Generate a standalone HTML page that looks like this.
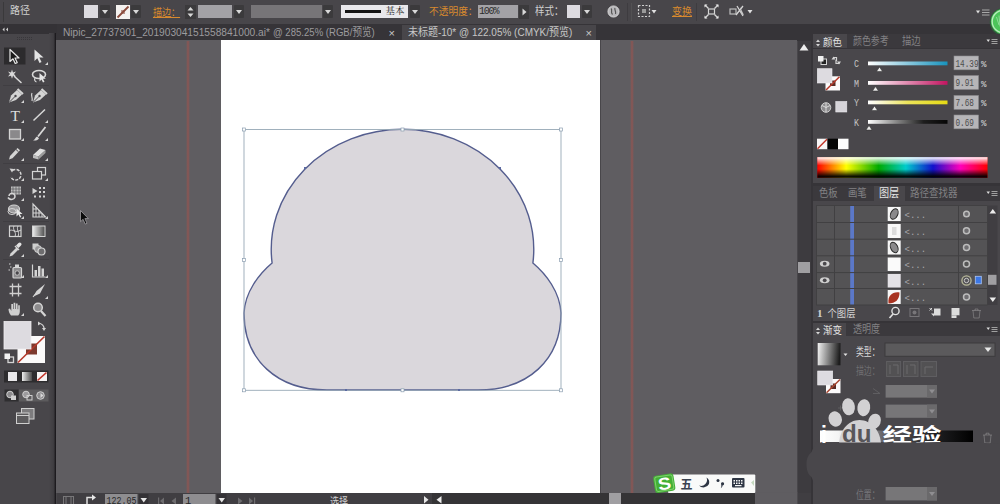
<!DOCTYPE html>
<html lang="zh">
<head>
<meta charset="utf-8">
<title>Illustrator</title>
<style>
*{box-sizing:border-box;margin:0;padding:0}
html,body{width:1000px;height:504px;overflow:hidden;background:#48464a}
body{position:relative;font-family:"Liberation Sans","Noto Sans CJK SC",sans-serif;font-size:11px;color:#d6d6d6}
.a{position:absolute}
.t{position:absolute;white-space:nowrap;line-height:1}
#topbar{left:0;top:0;width:1000px;height:24px;background:#48464a}
#tabbar{left:56px;top:24px;width:756px;height:16.5px;background:#363438}
#tab2{left:402px;top:24.5px;width:194px;height:16px;background:#48464a}
#toolbox{left:0;top:24px;width:54.600px;height:480px;background:#48464a}
#toolhead{left:0;top:24px;width:56.500px;height:9.5px;background:#343236}
#toolsep{left:48.600px;top:33px;width:7.500px;height:471px;background:linear-gradient(to right,#48464a 0,#413f43 50%,#3b393d 76%,#201e22 82%,#1c1a1e 94%,#3a383c 100%)}
#canvas{left:56.100px;top:40px;width:741.400px;height:453px;background:#5f5d61}
#artboard{left:220.8px;top:40px;width:380.4px;height:453.5px;background:#fff;border-right:1px solid #48464a}
.guide{top:40.5px;width:4px;height:453px;background:linear-gradient(to right,rgba(140,88,86,0),rgba(136,86,84,.9) 40%,rgba(136,86,84,.9) 60%,rgba(140,88,86,0))}
#vscroll{left:797.5px;top:40.5px;width:13px;height:463.5px;background:#3d3b3f}
#vthumb{left:798.4px;top:261.5px;width:11.6px;height:11.2px;background:#a09fa2}
#status{left:56.5px;top:493px;width:754px;height:11px;background:#403e42}
#hthumb{left:609px;top:493px;width:12px;height:11px;background:#a09fa2}
#dock{left:810.5px;top:24px;width:190px;height:480px;background:#363438}
.panel{background:#49474b}
.phead{background:#3b393d}
.or{color:#d88a2e}
.dd{background:#3b3a3c;border-radius:1px}
.dd:after{content:"";position:absolute;left:50%;top:50%;margin:-1.5px 0 0 -3px;border:3px solid transparent;border-top:4px solid #d8d8d8;border-bottom:none}
.sw{background:#dddbe0}
.ci{font-family:"Noto Serif CJK SC","Noto Sans CJK SC",serif}
</style>
</head>
<body>
<div class="a" id="topbar"></div>
<div class="a" id="tabbar"></div>
<div class="a" id="tab2"></div>
<div class="a" id="toolbox"></div>
<div class="a" id="toolhead"></div>
<div class="a" id="toolsep"></div>
<div class="a" id="canvas"></div>
<div class="a" id="artboard"></div>
<div class="a guide" style="left:186.4px"></div>
<div class="a guide" style="left:629.8px"></div>
<div class="a" id="vscroll"></div>
<div class="a" id="vthumb"></div>
<div class="a" id="status"></div>
<div class="a" id="hthumb"></div>
<div class="a" id="dock"></div>

<!-- ARTWORK -->
<svg class="a" style="left:0;top:0" width="1000" height="504" viewBox="0 0 1000 504">
  <path d="M272.1,263 A131.3,120 0 0 1 402.5,129.300 A131.3,120 0 0 1 532.9,263 C546,274 560,292 561,313 C561,360 528,390 478,390 L327,390 C277,390 244,360 244,313 C245,292 259,274 272.1,263 Z" fill="#dad7dc" stroke="#545d8e" stroke-width="1.400"/>
  <rect x="244" y="129.500" width="317" height="260.800" fill="none" stroke="#97a8b6" stroke-width="0.900"/>
  <g fill="#fff" stroke="#8a9db0" stroke-width="0.7">
    <rect x="242.5" y="128" width="3" height="3"/><rect x="401" y="128" width="3" height="3"/><rect x="559.5" y="128" width="3" height="3"/>
    <rect x="242.5" y="258.500" width="3" height="3"/><rect x="559.5" y="258.500" width="3" height="3"/>
    <rect x="242.5" y="388.800" width="3" height="3"/><rect x="401" y="388.800" width="3" height="3"/><rect x="559.5" y="388.800" width="3" height="3"/>
  </g>
  <g fill="#5b6aa2">
    <rect x="304" y="167" width="2" height="2"/><rect x="499" y="167" width="2" height="2"/>
    <rect x="345" y="389" width="2" height="2"/><rect x="458" y="389" width="2" height="2"/>
  </g>
</svg>

<!-- TOPBAR -->
<div id="tb">
<div class="a" style="left:3px;top:2px;width:1px;height:20px;background:#3a393b"></div>
<div class="t" style="left:10px;top:5.500px;font-size:10px;color:#d0d0d0">路径</div>
<div class="a sw" style="left:84px;top:4.5px;width:14px;height:13.5px"></div>
<div class="a dd" style="left:99.5px;top:5px;width:10px;height:13px"></div>
<svg class="a" style="left:116px;top:4.5px" width="14" height="14" viewBox="0 0 14 14"><rect width="14" height="14" fill="#f4f2f0"/><path d="M1.500,12.500L12.500,1.500" stroke="#8a4a3c" stroke-width="1.800"/><rect x="5" y="5" width="4" height="4" fill="#8a4a3c" opacity=".55"/></svg>
<div class="a dd" style="left:131px;top:5px;width:10px;height:13px"></div>
<div class="t or" style="left:152.500px;top:6.500px;font-size:10.500px;text-decoration:underline;transform-origin:0 0;transform:scaleX(.86)">描边：</div>
<svg class="a" style="left:184.500px;top:4.500px" width="11" height="14" viewBox="0 0 11 14"><rect width="11" height="14" fill="#3b3a3c"/><path d="M2.500,5.500L5.500,2L8.500,5.500Z M2.500,8.500L5.500,12L8.500,8.500Z" fill="#d8d8d8"/></svg>
<div class="a" style="left:197.5px;top:4.5px;width:34.5px;height:13.5px;background:#a3a2a6"></div>
<div class="a dd" style="left:234px;top:5px;width:10px;height:13px"></div>
<div class="a" style="left:251px;top:5px;width:70.500px;height:13px;background:#777578"></div>
<div class="a dd" style="left:323px;top:5px;width:10px;height:13px"></div>
<div class="a" style="left:340.500px;top:5px;width:67px;height:13px;background:#e9e8eb"></div>
<div class="a" style="left:345px;top:10.300px;width:36px;height:2.400px;background:#141414"></div>
<div class="t ci" style="left:385.500px;top:6px;font-size:9.500px;color:#2a2a2a">基本</div>
<div class="a dd" style="left:410px;top:5px;width:10px;height:13px"></div>
<div class="t or" style="left:429px;top:6px;font-size:10.500px;transform-origin:0 0;transform:scaleX(.925)">不透明度：</div>
<div class="a" style="left:477.500px;top:4.500px;width:40px;height:13.500px;background:#a3a2a6"></div>
<div class="t" style="left:479px;top:6.500px;font-size:10px;color:#2c2c2c;font-family:'Liberation Mono',monospace;letter-spacing:-1.200px">100%</div>
<svg class="a" style="left:519px;top:4.500px" width="10" height="14" viewBox="0 0 10 14"><rect width="10" height="14" fill="#3b3a3c"/><path d="M3.500,3.500L7.500,7L3.500,10.500Z" fill="#d8d8d8"/></svg>
<div class="t" style="left:535px;top:6px;font-size:11px;color:#d0d0d0;transform-origin:0 0;transform:scaleX(.86)">样式：</div>
<div class="a sw" style="left:567px;top:4.500px;width:13px;height:13.500px"></div>
<div class="a dd" style="left:581.500px;top:5px;width:10px;height:13px"></div>
<svg class="a" style="left:607px;top:4.500px" width="13" height="13" viewBox="0 0 13 13"><circle cx="6.500" cy="6.500" r="5.600" fill="#b9b8bb"/><circle cx="6.500" cy="6.500" r="5.600" fill="none" stroke="#e2e2e2" stroke-width=".8"/><path d="M4,3.500C6,5 3,7 5.500,9.500 M8,3C7,5 9.500,6 8.500,9" stroke="#555" stroke-width="1.200" fill="none"/></svg>
<div class="a" style="left:627px;top:3px;width:1px;height:18px;background:#3e3c40"></div>
<div class="a" style="left:631px;top:3px;width:1px;height:18px;background:#525153"></div>
<svg class="a" style="left:637px;top:4px" width="22" height="15" viewBox="0 0 22 15"><rect x="1.500" y="1.500" width="11" height="11" fill="none" stroke="#cfcfcf" stroke-width="1.200" stroke-dasharray="2 1.500"/><rect x="5" y="5" width="4" height="4" fill="#9a9a9a"/><path d="M14.500,6L19.500,6L17,9.500Z" fill="#e0e0e0"/></svg>
<div class="t or" style="left:672px;top:6.500px;font-size:10px;text-decoration:underline">变换</div>
<div class="a" style="left:695.500px;top:3px;width:1px;height:18px;background:#3e3c40"></div>
<svg class="a" style="left:704px;top:4px" width="15" height="15" viewBox="0 0 15 15"><rect x="4.500" y="5" width="6" height="5" fill="none" stroke="#d5d5d5" stroke-width="1.200"/><path d="M1,1L4.500,4.500M14,1L10.500,4.500M1,14L4.500,10.500M14,14L10.500,10.500" stroke="#d5d5d5" stroke-width="1.400"/><path d="M0.500,0.500h3l-3,3zM14.500,0.500h-3l3,3zM0.500,14.500h3l-3,-3zM14.500,14.500h-3l3,-3z" fill="#e5e5e5"/></svg>
<svg class="a" style="left:729px;top:4px" width="26" height="15" viewBox="0 0 26 15"><rect x="1" y="5" width="6" height="5" fill="none" stroke="#bdbdbd" stroke-width="1.200"/><path d="M8,2L14,12M14,2L7,11" stroke="#d5d5d5" stroke-width="1.300"/><path d="M11,3l4,8l-3,-1z" fill="#c8c8c8"/><path d="M18.500,6L23.500,6L21,9.500Z" fill="#e0e0e0"/></svg>
<svg class="a" style="left:975px;top:8px" width="16" height="10" viewBox="0 0 16 10"><path d="M1,2.500h4L3,5.500Z" fill="#e0e0e0"/><path d="M7,2h7.500M7,4.500h7.500M7,7h7.500" stroke="#a8a8a8" stroke-width="1.100"/></svg>
<svg class="a" style="left:984px;top:7px" width="16" height="30" viewBox="0 0 16 30"><circle cx="19.500" cy="15" r="13.800" fill="#2f5b3a"/><circle cx="19.500" cy="14.500" r="12.600" fill="#4cc45a"/><circle cx="19.500" cy="14.500" r="11.300" fill="none" stroke="#b9ecbd" stroke-width="1.300"/><path d="M12.500,10l2.500,8M15,8.500l1,11" stroke="#8fdc97" stroke-width="1"/></svg>
</div>

<!-- TABS -->
<div class="t" style="left:62.800px;top:26.500px;font-size:11.500px;color:#9c9b9e;transform-origin:0 0;transform:scaleX(.884)">Nipic_27737901_20190304151558841000.ai*</div>
<div class="t" style="left:273px;top:26.500px;font-size:11.500px;color:#9c9b9e;transform-origin:0 0;transform:scaleX(.832)">@ 285.25% (RGB/预览)</div>
<div class="t" style="left:388.500px;top:27.500px;font-size:11px;color:#c8c8c8">×</div>
<div class="t" style="left:408px;top:26.500px;font-size:11.500px;color:#c6c6c6;transform-origin:0 0;transform:scaleX(.868)">未标题-10* @ 122.05% (CMYK/预览)</div>
<div class="t" style="left:585.500px;top:27.500px;font-size:11px;color:#c8c8c8">×</div>
<!--TOOLS-->
<div id="tools">
<svg class="a" style="left:0;top:24px" width="56" height="420" viewBox="0 24 56 420">
  <!-- header collapse arrows + grip -->
  <path d="M4.500,27.500L2.500,29.500L4.500,31.500Z M8,27.500L6,29.500L8,31.500Z" fill="#cfcfcf"/>
  <path d="M17,37.500h16M17,39.500h16" stroke="#39373b" stroke-width="1" stroke-dasharray="1 1"/>
  <!-- selected tool bg -->
  <rect x="4" y="47.500" width="21.500" height="17" fill="#2c2b2d"/>
  <!-- separators -->
  <g stroke="#403e42" stroke-width="1"><path d="M3,85.500h46M3,163.500h46M3,221.500h46M3,259.500h46"/></g>
  <!-- sub-tool triangles -->
  <g fill="#d5d5d5">
    <path d="M48,62v3h-3z"/><path d="M24,100v3h-3z"/><path d="M24,120v3h-3z"/><path d="M48,120v3h-3z"/>
    <path d="M24,138v3h-3z"/><path d="M48,138v3h-3z"/><path d="M24,158v3h-3z"/><path d="M48,158v3h-3z"/>
    <path d="M24,178v3h-3z"/><path d="M48,178v3h-3z"/><path d="M24,198v3h-3z"/><path d="M24,216v3h-3z"/><path d="M48,216v3h-3z"/>
    <path d="M24,254v3h-3z"/><path d="M24,275v3h-3z"/><path d="M48,275v3h-3z"/><path d="M48,296v3h-3z"/><path d="M24,313v3h-3z"/>
  </g>
  <!-- row1: selection (outlined), direct selection (filled) -->
  <path d="M10,49.500L10,61.500L13,58.800L15.200,63.500L17.200,62.600L15,58L19,58Z" fill="#1a1a1a" stroke="#e8e8e8" stroke-width="1.200" stroke-linejoin="round"/>
  <path d="M34.500,49.500L34.500,61L37.300,58.300L39.500,63L41.500,62L39.300,57.500L43.500,57.500Z" fill="#e4e4e4"/>
  <!-- row2: magic wand, lasso -->
  <g stroke="#d8d8d8" stroke-width="1.600" stroke-linecap="round"><path d="M14.500,76.500L21,82.500"/></g>
  <path d="M12,69.500l1,3l3,-1l-2,2.500l2,2.500l-3,-.8l-1,3l-1,-3l-3,.8l2,-2.500l-2,-2.500l3,1z" fill="#d8d8d8"/>
  <ellipse cx="39" cy="74.500" rx="6.500" ry="4" fill="none" stroke="#d8d8d8" stroke-width="1.600"/>
  <path d="M39.500,73l0,8.500l2,-2l1.500,3l1.500,-.7l-1.500,-3l2.800,0z" fill="#e4e4e4"/>
  <path d="M35,78c-1,2 0,3.500 1.500,4" stroke="#d8d8d8" stroke-width="1.200" fill="none"/>
  <!-- row3: pen, curvature pen -->
  <path d="M9,102.500l2,-7l6,-5.500l5,4.500l-6,5.500z" fill="#d4d4d4"/><path d="M9.500,102l5.500,-5.500" stroke="#48464a" stroke-width="1"/><circle cx="15.500" cy="96" r="1.200" fill="#48464a"/><path d="M17.500,89l5.500,5" stroke="#d4d4d4" stroke-width="2"/>
  <path d="M33,102.500l2,-7l6,-5.500l5,4.500l-6,5.500z" fill="#d4d4d4"/><path d="M33.500,102l5.500,-5.500" stroke="#48464a" stroke-width="1"/><circle cx="39.500" cy="96" r="1.200" fill="#48464a"/><path d="M41.500,89l5.500,5" stroke="#d4d4d4" stroke-width="2"/><path d="M32,93c-1.500,3 1,4 0,8" stroke="#d4d4d4" stroke-width="1.200" fill="none"/>
  <!-- row4: T, line -->
  <text x="10.500" y="120.500" font-family="Liberation Serif, serif" font-size="15.500" fill="#dcdcdc">T</text>
  <path d="M33.500,120.500L45,109.500" stroke="#d8d8d8" stroke-width="1.500"/>
  <!-- row5: rectangle, brush -->
  <rect x="9.500" y="129.500" width="11" height="9.500" fill="#8a898b" stroke="#d4d4d4" stroke-width="1.300"/>
  <path d="M45.500,127L38,136.500" stroke="#d8d8d8" stroke-width="1.800"/><path d="M33,140.500c2,-.5 2,-3 4,-4l2,1.800c-1,2 -3,2.500 -6,2.200z" fill="#d8d8d8"/>
  <!-- row6: pencil, eraser -->
  <path d="M9,159.500l1,-3.500l7.500,-8l2.500,2.300l-7.500,8z" fill="#d4d4d4"/><path d="M16,149.500l2.500,2.300" stroke="#48464a" stroke-width="1"/>
  <path d="M33,155l7,-6.500l5.500,1.500l-7,6.500z" fill="#e0e0e0"/><path d="M33,155l5.500,1.500v3l-5.500,-1.500z" fill="#bdbdbd"/><path d="M38.500,156.500l7,-6.500v3l-7,6.500z" fill="#9d9d9d"/>
  <!-- row7: rotate, scale -->
  <path d="M12.500,170.500A5.300,5.300 0 1 1 10.800,177" fill="none" stroke="#d4d4d4" stroke-width="1.500" stroke-dasharray="3 1.200"/><path d="M9.500,168.500l4.500,.5l-2,3.500z" fill="#d4d4d4"/>
  <rect x="37.500" y="167.500" width="8" height="7.500" fill="none" stroke="#d4d4d4" stroke-width="1.200"/><rect x="32.500" y="171.500" width="9" height="7.500" fill="#48464a" stroke="#d4d4d4" stroke-width="1.200"/>
  <!-- row8: warp/width, free transform -->
  <rect x="11" y="186.500" width="10" height="8" fill="#bcbcbc"/><path d="M13,186.500v8M16,186.500v8M19,186.500v8M11,189h10M11,192h10" stroke="#48464a" stroke-width=".6"/><path d="M9,196a3,3 0 1 1 5,2.500a4,4 0 0 1 -6,-1" fill="none" stroke="#d4d4d4" stroke-width="1.600"/>
  <path d="M32.500,188l5,3l-5,3z" fill="#d4d4d4"/><g fill="#d4d4d4"><rect x="39" y="187" width="2" height="2"/><rect x="43" y="187" width="2" height="2"/><rect x="39" y="191" width="2" height="2"/><rect x="43" y="191" width="2" height="2"/><rect x="39" y="195.500" width="2" height="2"/><rect x="43" y="195.500" width="2" height="2"/><rect x="34" y="195.500" width="2" height="2"/></g>
  <!-- row9: shape builder, perspective grid -->
  <ellipse cx="14" cy="209" rx="5.500" ry="4" fill="#9b9a9c" stroke="#d4d4d4" stroke-width="1.200"/><ellipse cx="12" cy="211.500" rx="4" ry="3" fill="none" stroke="#d4d4d4" stroke-width="1"/><path d="M16.500,208.500v8l2,-2l1.500,3l1.300,-.6l-1.500,-3h2.700z" fill="#e8e8e8"/>
  <path d="M33,204v13h12.500z" fill="none" stroke="#d4d4d4" stroke-width="1.200"/><path d="M36,207v10M39,210v7M42,213v4M33,209h4M33,213h8" stroke="#d4d4d4" stroke-width="1"/>
  <!-- row10: mesh, gradient -->
  <rect x="9.500" y="226" width="11.500" height="10.500" fill="none" stroke="#d4d4d4" stroke-width="1.200"/><path d="M9.500,231c3,-3 5,3 11.500,-1M14,226c-2,4 3,6 1,10.500M18,226c-2,4 2,6 0,10.500" stroke="#d4d4d4" stroke-width="1" fill="none"/>
  <defs><linearGradient id="gt" x1="0" x2="1"><stop offset="0" stop-color="#efefef"/><stop offset="1" stop-color="#4a4a4a"/></linearGradient></defs>
  <rect x="32.500" y="226" width="12.500" height="10.500" fill="url(#gt)" stroke="#d4d4d4" stroke-width="1"/>
  <!-- row11: eyedropper, blend -->
  <path d="M9.500,256.500l1,-3l6,-6l2,2l-6,6z" fill="#d4d4d4"/><path d="M16,245.500l2.500,-2.500a1.600,1.600 0 0 1 2.500,2.500l-2.500,2.500z" fill="#e2e2e2"/><path d="M15,246l4,4" stroke="#d4d4d4" stroke-width="1.500"/>
  <rect x="32.500" y="243.500" width="6" height="6" fill="#cfcfcf"/><circle cx="38" cy="249" r="3.500" fill="#9a999b" stroke="#d4d4d4" stroke-width="1"/><circle cx="41.500" cy="251.500" r="3.500" fill="#6d6c6e" stroke="#d4d4d4" stroke-width="1.200"/>
  <!-- row12: symbol sprayer, graph -->
  <rect x="13" y="267.500" width="8.500" height="10.500" rx="1" fill="#8c8b8d" stroke="#d4d4d4" stroke-width="1.200"/><rect x="15" y="264.500" width="4" height="3" fill="#d4d4d4"/><circle cx="17.200" cy="273" r="2.200" fill="#48464a" stroke="#d4d4d4" stroke-width=".8"/><path d="M9,264h1.500M10,267h1.500M8.500,270h1.500" stroke="#d4d4d4" stroke-width="1.200"/>
  <path d="M32.500,264.500v12.500h13" stroke="#d4d4d4" stroke-width="1.200" fill="none"/><rect x="34.500" y="270" width="2.500" height="6.500" fill="#d4d4d4"/><rect x="38" y="266" width="2.500" height="10.500" fill="#d4d4d4"/><rect x="41.500" y="268.500" width="2.500" height="8" fill="#d4d4d4"/>
  <!-- row13: artboard, slice -->
  <path d="M12.500,283.500v13M18.500,283.500v13M9.500,286.500h12M9.500,293.500h12" stroke="#cfcfcf" stroke-width="1.300" fill="none"/>
  <path d="M33.500,296.500l3,-5.500l8.500,-7l-5,9.500z" fill="#d4d4d4"/><path d="M33,297l4,-5" stroke="#d4d4d4" stroke-width="1.200"/>
  <!-- row14: hand, zoom -->
  <path d="M11,315.500c-1.500,-2 -2.500,-4 -2.500,-6.500l1.500,-.5l1.300,2.500v-7h1.700v5h.6v-6.200h1.700v6.200h.6v-5.400h1.700v5.600h.6v-4h1.600v6.300c0,2 -.8,3 -1.600,4z" fill="#d0d0d0"/>
  <circle cx="38" cy="307.500" r="4.300" fill="#8c8b8d" stroke="#d4d4d4" stroke-width="1.500"/><path d="M41,311l4.500,5" stroke="#d4d4d4" stroke-width="2.200"/>
  <!-- fill / stroke -->
  <path d="M39,323.500a5,5 0 0 1 5,5.500" fill="none" stroke="#d4d4d4" stroke-width="1.200"/><path d="M38,321.500l3,2l-3,2z M42,328l2,3l2,-3z" fill="#d4d4d4"/>
  <rect x="17.500" y="336" width="27.500" height="27" fill="#fbfafa"/>
  <rect x="26" y="343.500" width="11" height="11" fill="#7c392e"/>
  <path d="M18,362.500L44.500,336.500" stroke="#b5382a" stroke-width="1.600"/>
  <rect x="4" y="321.500" width="27" height="27.500" fill="#dddbe0" stroke="#efeef0" stroke-width=".8"/>
  <rect x="8" y="357" width="5.500" height="5.500" fill="none" stroke="#d4d4d4" stroke-width="1.300"/><rect x="4.500" y="353.500" width="5.500" height="5.500" fill="#f2f2f2"/>
  <!-- colour/gradient/none buttons -->
  <rect x="4" y="370.500" width="44.500" height="12" fill="#2d2c2e"/>
  <rect x="8" y="372" width="9" height="9" fill="#e9e8ea"/>
  <rect x="22" y="372" width="10" height="9" fill="url(#gt)"/>
  <rect x="37" y="372" width="10" height="9" fill="#f6f4f4"/><path d="M37.500,380.500L46.500,372.500" stroke="#c3362a" stroke-width="1.600"/>
  <!-- draw modes -->
  <rect x="4.500" y="389.500" width="14" height="12" fill="#2f2e30"/><rect x="19" y="389.500" width="29.500" height="12" fill="#5c5b5d"/>
  <circle cx="10" cy="394.500" r="3.300" fill="#8c8b8d" stroke="#d0d0d0" stroke-width="1"/><rect x="11" y="395.500" width="5" height="4.500" fill="#d0d0d0"/>
  <circle cx="26" cy="394.500" r="3.300" fill="#9c9b9d" stroke="#d0d0d0" stroke-width="1"/><rect x="27" y="395.500" width="5" height="4.500" fill="none" stroke="#d0d0d0" stroke-width="1"/>
  <circle cx="40.500" cy="395.500" r="3.800" fill="#8c8b8d" stroke="#d0d0d0" stroke-width="1"/><path d="M40.500,393v5l3,-2.500z" fill="#d8d8d8"/>
  <!-- screen mode -->
  <rect x="21.500" y="408.500" width="12.500" height="10.500" fill="#7d7c7e" stroke="#cfcfcf" stroke-width="1"/><rect x="16.500" y="413" width="12.500" height="10.500" fill="#5c5b5d" stroke="#cfcfcf" stroke-width="1"/><path d="M16.500,415.500h12.500" stroke="#cfcfcf" stroke-width="1"/>
</svg>
</div>
<!--PANELS-->
<div id="panels">
<!-- vscroll arrow -->
<svg class="a" style="left:799px;top:43px" width="10" height="8" viewBox="0 0 10 8"><path d="M.5,7.500L5,1L9.500,7.500Z" fill="#ededed"/></svg>

<!-- COLOR PANEL -->
<div class="a phead" style="left:812.500px;top:34.300px;width:187.500px;height:14.200px"></div>
<div class="a panel" style="left:812.500px;top:34.300px;width:34px;height:14.200px"></div>
<div class="a panel" style="left:812.500px;top:48.500px;width:187.500px;height:134.500px"></div>
<svg class="a" style="left:815px;top:38.500px" width="6" height="8" viewBox="0 0 6 8"><path d="M3,.5L5,3H1Z M3,7.500L5,5H1Z" fill="#d6d6d6"/></svg>
<div class="t" style="left:822.500px;top:36.500px;font-size:10.500px;color:#e2e2e2;transform-origin:0 0;transform:scaleX(.9)">颜色</div>
<div class="t" style="left:853px;top:36px;font-size:11px;color:#828184;transform-origin:0 0;transform:scaleX(.81)">颜色参考</div>
<div class="t" style="left:901.500px;top:36px;font-size:11px;color:#828184;transform-origin:0 0;transform:scaleX(.85)">描边</div>
<svg class="a" style="left:985px;top:37px" width="14" height="9" viewBox="0 0 14 9"><path d="M1.500,2.500h3.500L3.250,5Z" fill="#dcdcdc"/><path d="M6.500,2.500h6M6.500,4.500h6M6.500,6.500h6" stroke="#a0a0a0" stroke-width="1"/></svg>

<svg class="a" style="left:814px;top:52px" width="186" height="130" viewBox="814 52 186 130">
  <defs>
    <linearGradient id="gc" x1="0" x2="1"><stop offset="0" stop-color="#fff"/><stop offset="1" stop-color="#1793bd"/></linearGradient>
    <linearGradient id="gm" x1="0" x2="1"><stop offset="0" stop-color="#fff"/><stop offset="1" stop-color="#c21460"/></linearGradient>
    <linearGradient id="gy" x1="0" x2="1"><stop offset="0" stop-color="#fff"/><stop offset=".12" stop-color="#fbf9e0"/><stop offset=".5" stop-color="#ece45a"/><stop offset="1" stop-color="#e4da14"/></linearGradient>
    <linearGradient id="gk" x1="0" x2="1"><stop offset="0" stop-color="#fff"/><stop offset=".35" stop-color="#8a8a8a"/><stop offset=".7" stop-color="#1e1e1e"/><stop offset="1" stop-color="#060606"/></linearGradient>
    <linearGradient id="hue" x1="0" x2="1"><stop offset="0" stop-color="#f00"/><stop offset=".17" stop-color="#ff0"/><stop offset=".36" stop-color="#0a0"/><stop offset=".52" stop-color="#0cc"/><stop offset=".68" stop-color="#11c"/><stop offset=".84" stop-color="#f0b"/><stop offset="1" stop-color="#f00"/></linearGradient>
    <linearGradient id="wb" x1="0" x2="0" y1="0" y2="1"><stop offset="0" stop-color="#fff" stop-opacity="1"/><stop offset=".15" stop-color="#fff" stop-opacity=".6"/><stop offset=".4" stop-color="#fff" stop-opacity="0"/><stop offset=".58" stop-color="#000" stop-opacity="0"/><stop offset=".92" stop-color="#000" stop-opacity=".92"/><stop offset="1" stop-color="#000" stop-opacity="1"/></linearGradient>
  </defs>
  <!-- small default / swap icons -->
  <rect x="821" y="59" width="5.500" height="5.500" fill="#222" stroke="#d4d4d4" stroke-width="1"/><rect x="818" y="56" width="5.500" height="5.500" fill="#f0f0f0"/>
  <path d="M833,57.500h3.500v3.500M839.500,63.500h-3.500v-3.500" fill="none" stroke="#d4d4d4" stroke-width="1.200"/><path d="M831.500,59.500l2,-3l2,3z M841,61.500l-2,3l-2,-3z" fill="#d4d4d4"/>
  <!-- stroke + fill -->
  <rect x="825.500" y="76.300" width="14.500" height="14.200" fill="#fbfafa"/><rect x="830" y="80.500" width="5.500" height="5.500" fill="#5a2d26"/><path d="M826,90L839.500,76.800" stroke="#b5382a" stroke-width="1.500"/>
  <rect x="817.300" y="68.700" width="14.700" height="14.300" fill="#dddbe0" stroke="#efeef0" stroke-width=".6"/>
  <!-- cube + swatch -->
  <circle cx="826" cy="107.500" r="4.800" fill="#8c8b8d" stroke="#cfcfcf" stroke-width="1"/><path d="M826,103v9M822,105.500l4,2l4,-2" stroke="#e2e2e2" stroke-width=".9" fill="none"/>
  <rect x="835.800" y="101.500" width="11" height="10.500" fill="#d6d4d9" stroke="#eceaee" stroke-width=".6"/>
  <!-- labels -->
  <g font-family="Liberation Mono, monospace" font-size="11" fill="#c4c4c4"><text x="854" y="67" textLength="5" lengthAdjust="spacingAndGlyphs">C</text><text x="854" y="86.500" textLength="5" lengthAdjust="spacingAndGlyphs">M</text><text x="854" y="106" textLength="5" lengthAdjust="spacingAndGlyphs">Y</text><text x="854" y="125.500" textLength="5" lengthAdjust="spacingAndGlyphs">K</text></g>
  <!-- sliders -->
  <rect x="868" y="61.500" width="79.500" height="3.800" fill="url(#gc)"/>
  <rect x="868" y="81" width="79.500" height="3.800" fill="url(#gm)"/>
  <rect x="868" y="100.500" width="79.500" height="3.800" fill="url(#gy)"/>
  <rect x="868" y="120" width="79.500" height="3.800" fill="url(#gk)"/>
  <g fill="#ececec" stroke="#2e2e2e" stroke-width=".5"><path d="M876.500,71.500l3,-4.500l3,4.500z"/><path d="M872.500,91l3,-4.500l3,4.500z"/><path d="M871.500,110.500l3,-4.500l3,4.500z"/><path d="M866,130l3,-4.500l3,4.500z"/></g>
  <!-- value boxes -->
  <g fill="#b6b5b8" stroke="#8d8c8f" stroke-width=".6"><rect x="954" y="56" width="24.500" height="13.800"/><rect x="954" y="75.600" width="24.500" height="13.800"/><rect x="954" y="95.500" width="24.500" height="13.800"/><rect x="954" y="115" width="24.500" height="13.800"/></g>
  <g font-family="Liberation Mono, monospace" font-size="10.500" fill="#4c4c4c"><text x="955.500" y="66.800" textLength="23" lengthAdjust="spacingAndGlyphs">14.39</text><text x="955.500" y="86.300" textLength="18.500" lengthAdjust="spacingAndGlyphs">9.91</text><text x="955.500" y="106.200" textLength="18.500" lengthAdjust="spacingAndGlyphs">7.68</text><text x="955.500" y="125.800" textLength="18.500" lengthAdjust="spacingAndGlyphs">0.69</text></g>
  <g font-family="Liberation Mono, monospace" font-size="9" fill="#c4c4c4" font-weight="bold"><text x="981" y="67" textLength="5.500" lengthAdjust="spacingAndGlyphs">%</text><text x="981" y="86.500" textLength="5.500" lengthAdjust="spacingAndGlyphs">%</text><text x="981" y="106.300" textLength="5.500" lengthAdjust="spacingAndGlyphs">%</text><text x="981" y="126" textLength="5.500" lengthAdjust="spacingAndGlyphs">%</text></g>
  <!-- none / black / white -->
  <rect x="817" y="138.700" width="10.500" height="10.500" fill="#f8f6f6"/><path d="M817.500,148.700L827,139.200" stroke="#c3362a" stroke-width="1.400"/>
  <rect x="827.500" y="138.700" width="10.500" height="10.500" fill="#050505"/>
  <rect x="838" y="138.700" width="10.500" height="10.500" fill="#fdfdfd"/>
  <!-- spectrum -->
  <rect x="817.300" y="157.200" width="170.200" height="20.600" fill="url(#hue)"/>
  <rect x="817.300" y="157.200" width="170.200" height="20.600" fill="url(#wb)"/>
</svg>

<!-- LAYERS PANEL -->
<div class="a phead" style="left:812.500px;top:186.400px;width:187.500px;height:14.200px"></div>
<div class="a panel" style="left:874px;top:186.400px;width:30.500px;height:14.200px"></div>
<div class="a panel" style="left:812.500px;top:200.600px;width:187.500px;height:120px"></div>
<div class="t" style="left:818.500px;top:188px;font-size:11px;color:#828184;transform-origin:0 0;transform:scaleX(.85)">色板</div>
<div class="t" style="left:848px;top:188px;font-size:11px;color:#828184;transform-origin:0 0;transform:scaleX(.85)">画笔</div>
<div class="t" style="left:879px;top:188px;font-size:11px;color:#e6e6e6;transform-origin:0 0;transform:scaleX(.92)">图层</div>
<div class="t" style="left:909.500px;top:188px;font-size:11px;color:#828184;transform-origin:0 0;transform:scaleX(.865)">路径查找器</div>
<svg class="a" style="left:985px;top:189px" width="14" height="9" viewBox="0 0 14 9"><path d="M1.500,2.500h3.500L3.250,5Z" fill="#dcdcdc"/><path d="M6.500,2.500h6M6.500,4.500h6M6.500,6.500h6" stroke="#a0a0a0" stroke-width="1"/></svg>

<svg class="a" style="left:814px;top:203px" width="186" height="118" viewBox="814 203 186 118">
  <rect x="816" y="205.500" width="171.500" height="99.500" fill="#545355"/>
  <rect x="988" y="205.500" width="9.500" height="99.500" fill="#403e42"/>
  <rect x="850.200" y="206" width="3.800" height="99" fill="#5b78c8"/>
  <g stroke="#414042" stroke-width="1" fill="none">
    <path d="M816,205.500h171.500M816,222.500h171.500M816,239.200h171.500M816,255.800h171.500M816,272.600h171.500M816,288.500h171.500M816,305h171.500"/>
    <path d="M816.500,205.500v99.500M834.500,205.500v99.500M958.500,205.500v99.500M987.500,205.500v99.500"/>
  </g>
  <!-- thumbnails -->
  <g>
    <rect x="887.700" y="207" width="13" height="14" fill="#f6f6f6"/><ellipse cx="894.200" cy="214" rx="3.500" ry="5.500" transform="rotate(25 894.200 214)" fill="#8a898b" stroke="#2a2a2a" stroke-width="1"/>
    <rect x="887.700" y="224" width="13" height="14" fill="#f8f8f8"/><rect x="892" y="227" width="4.500" height="8" fill="#dcdcdc"/>
    <rect x="887.700" y="240.500" width="13" height="14" fill="#f6f6f6"/><ellipse cx="894.200" cy="247.500" rx="3.500" ry="5.500" transform="rotate(-25 894.200 247.500)" fill="#8a898b" stroke="#2a2a2a" stroke-width="1"/>
    <rect x="887.700" y="257.500" width="13" height="13.500" fill="#fafafa"/>
    <rect x="887.700" y="274" width="13" height="13.500" fill="#e4e2e6"/>
    <rect x="887.700" y="290" width="13" height="14" fill="#f6f6f6"/><path d="M888.500,303.500c-1,-8 4,-12 11,-11c0,7 -4,11 -11,11z" fill="#a83220"/>
  </g>
  <!-- names -->
  <g font-family="Liberation Mono, monospace" font-size="9" fill="#a9a8ab"><text x="904.500" y="218">&lt;...</text><text x="904.500" y="234.500">&lt;...</text><text x="904.500" y="251.500">&lt;...</text><text x="904.500" y="268">&lt;...</text><text x="904.500" y="284.500">&lt;...</text><text x="904.500" y="300.500">&lt;...</text></g>
  <!-- target circles -->
  <g fill="#6f6e71" stroke="#bcbcbc" stroke-width="1.500"><circle cx="966.500" cy="214" r="2.800"/><circle cx="966.500" cy="230.700" r="3"/><circle cx="966.500" cy="247.500" r="3"/><circle cx="966.500" cy="264" r="3" fill="#555"/><circle cx="966.500" cy="297" r="3"/></g>
  <circle cx="966.500" cy="280.500" r="4.600" fill="none" stroke="#b9b99a" stroke-width="1.300"/><circle cx="966.500" cy="280.500" r="2.200" fill="#55545a" stroke="#c9c9c9" stroke-width="1"/>
  <rect x="975.300" y="276.300" width="6" height="7.500" fill="#3c78e6" stroke="#a9c4f5" stroke-width=".8"/>
  <!-- eyes -->
  <g><ellipse cx="824.700" cy="263.700" rx="4.800" ry="3" fill="#cfcfcf"/><circle cx="824.700" cy="263.700" r="1.900" fill="#4a484c"/><ellipse cx="824.700" cy="280.300" rx="4.800" ry="3" fill="#cfcfcf"/><circle cx="824.700" cy="280.300" r="1.900" fill="#4a484c"/></g>
  <!-- layer scrollbar -->
  <path d="M989.500,213.500l3.300,-4.500l3.300,4.500z M989.500,297.500l3.300,4.500l3.300,-4.500z" fill="#ececec"/>
  <rect x="988" y="274.800" width="8.500" height="10" fill="#a09fa2"/>
  <!-- footer -->
  <text x="817" y="317" font-family="Liberation Serif, 'Noto Serif CJK SC', serif" font-size="11" fill="#d2d2d2" font-weight="bold">1</text>
  <text x="827.500" y="317" font-family="Liberation Sans, 'Noto Sans CJK SC', sans-serif" font-size="10.500" fill="#d2d2d2" textLength="28" lengthAdjust="spacingAndGlyphs">个图层</text>
  <circle cx="895.500" cy="311" r="3.600" fill="none" stroke="#e0e0e0" stroke-width="1.400"/><path d="M893,314l-3.500,4" stroke="#e0e0e0" stroke-width="1.600"/>
  <g opacity=".35"><rect x="910" y="308.500" width="9" height="8" fill="none" stroke="#cfcfcf" stroke-width="1"/><circle cx="914.500" cy="312.500" r="2" fill="#cfcfcf"/></g>
  <path d="M929.500,308l2.500,2.500M932,308l-2.500,2.500" stroke="#d8d8d8" stroke-width="1"/><rect x="934" y="308.500" width="6.500" height="7" fill="#dcdcdc"/><path d="M931,313.500h3v3z" fill="#dcdcdc"/>
  <rect x="951.500" y="308" width="8" height="7.500" fill="#dcdcdc"/><path d="M956.500,315.500v2.500h3v-2.500z" fill="#48464a"/><path d="M951.500,315.500h5v2.500h-5z" fill="#dcdcdc"/>
  <g opacity=".3" stroke="#cfcfcf" stroke-width="1" fill="none"><path d="M972,310.500h9M973,310.500l.8,7.500h5.400l.8,-7.500M975,310.500v-1.500h3v1.500"/></g>
</svg>

<!-- GRADIENT PANEL -->
<div class="a phead" style="left:812.500px;top:322.500px;width:187.500px;height:13.800px"></div>
<div class="a panel" style="left:812.500px;top:322.500px;width:33.500px;height:13.800px"></div>
<div class="a panel" style="left:812.500px;top:336.300px;width:187.500px;height:168px"></div>
<svg class="a" style="left:815px;top:326.500px" width="6" height="8" viewBox="0 0 6 8"><path d="M3,.5L5,3H1Z M3,7.500L5,5H1Z" fill="#d6d6d6"/></svg>
<div class="t" style="left:822.500px;top:324.500px;font-size:10.500px;color:#e2e2e2;transform-origin:0 0;transform:scaleX(.9)">渐变</div>
<div class="t" style="left:853px;top:324px;font-size:11px;color:#828184;transform-origin:0 0;transform:scaleX(.82)">透明度</div>
<svg class="a" style="left:985px;top:325px" width="14" height="9" viewBox="0 0 14 9"><path d="M1.500,2.500h3.500L3.250,5Z" fill="#dcdcdc"/><path d="M6.500,2.500h6M6.500,4.500h6M6.500,6.500h6" stroke="#a0a0a0" stroke-width="1"/></svg>

<svg class="a" style="left:806px;top:338px" width="194" height="166" viewBox="806 338 194 166">
  <defs>
    <linearGradient id="gg" x1="0" x2="1" y1="0" y2=".08"><stop offset="0" stop-color="#f4f4f4"/><stop offset="1" stop-color="#1c1c1c"/></linearGradient>
    <linearGradient id="gb" x1="0" x2="1"><stop offset="0" stop-color="#fff"/><stop offset=".12" stop-color="#f4f4f4"/><stop offset=".42" stop-color="#626064"/><stop offset=".78" stop-color="#1c1c1e"/><stop offset="1" stop-color="#000"/></linearGradient>
  </defs>
  <rect x="817.700" y="343" width="22.800" height="22.300" fill="url(#gg)"/>
  <path d="M843.500,353.500h4l-2,2.500z" fill="#e4e4e4"/>
  <text x="856" y="356" font-family="Liberation Sans, 'Noto Sans CJK SC', sans-serif" font-size="11" fill="#d8d8d8" textLength="23.500" lengthAdjust="spacingAndGlyphs">类型：</text>
  <rect x="885" y="343" width="110" height="13.300" fill="#5b5a5c" stroke="#3c3b3d" stroke-width="1"/>
  <path d="M984.500,347.500h7l-3.500,4.500z" fill="#e8e8e8"/>
  <text x="856" y="374.500" font-family="Liberation Sans, 'Noto Sans CJK SC', sans-serif" font-size="11" fill="#6f6e71" textLength="23.500" lengthAdjust="spacingAndGlyphs">描边：</text>
  <g fill="#525153" stroke="#5f5e61" stroke-width="1"><rect x="886.600" y="361.500" width="14" height="15"/><rect x="903.500" y="361.500" width="14.500" height="15"/><rect x="921" y="361.500" width="15.500" height="15"/></g>
  <g stroke="#6b6a6d" stroke-width="1" fill="none"><path d="M890,365v9M893,365h5v9"/><path d="M907,365v9M910,365h5v9"/><path d="M925,374v-7h8"/></g>
  <!-- fill/stroke -->
  <rect x="826" y="379" width="14.500" height="14.200" fill="#fbfafa"/><rect x="830.500" y="383.500" width="5.500" height="5.500" fill="#5a2d26"/><path d="M826.500,392.700L840,379.500" stroke="#a8452f" stroke-width="1.500"/>
  <rect x="817.700" y="371" width="15" height="14" fill="#dddbe0" stroke="#efeef0" stroke-width=".6"/>
  <!-- dropdowns -->
  <g fill="#777678"><rect x="885.600" y="385" width="51.400" height="12.600"/><rect x="885.600" y="404.600" width="51.400" height="13.200"/><rect x="885.600" y="487" width="51.400" height="13.400"/></g>
  <g fill="#6a696b"><rect x="927" y="385" width="10" height="12.600"/><rect x="927" y="404.600" width="10" height="13.200"/><rect x="927" y="487" width="10" height="13.400"/></g>
  <g fill="#8f8e91"><path d="M929,389.500h6l-3,4z"/><path d="M929,409.500h6l-3,4z"/><path d="M929,492h6l-3,4z"/></g>
  <path d="M873,393.500h7l-7,-5" fill="none" stroke="#5f5e61" stroke-width="1"/>
  <path d="M838,408h5M840.500,405.500v5" stroke="#5f5e61" stroke-width="1"/>
  <text x="856" y="499" font-family="Liberation Sans, 'Noto Sans CJK SC', sans-serif" font-size="11" fill="#77767a" textLength="23.500" lengthAdjust="spacingAndGlyphs">位置：</text>
  <!-- gradient slider bar -->
  <rect x="820" y="430.500" width="153" height="11.500" fill="url(#gb)"/>
  <g opacity=".3" stroke="#cfcfcf" stroke-width="1" fill="none"><path d="M983,435h9M984,435l.8,8h5.400l.8,-8M986,435v-1.800h3v1.800"/></g>
  <!-- watermark (paw + text) -->
  <g fill="#d2d1d3">
    <ellipse cx="848.500" cy="406.800" rx="6.400" ry="8.600" transform="rotate(-8 848.500 406.800)"/>
    <ellipse cx="863.800" cy="407.700" rx="6.400" ry="8.600" transform="rotate(8 863.800 407.700)"/>
    <ellipse cx="835.200" cy="419" rx="6.600" ry="7.800" transform="rotate(-20 835.200 419)"/>
    <ellipse cx="874.500" cy="421.300" rx="6.200" ry="7.800" transform="rotate(20 874.500 421.300)"/>
    <path d="M839,445c0,-14 9,-25 20.500,-25s21.500,11 21.500,25z"/>
  </g>
  <clipPath id="wmclip"><rect x="820.500" y="420" width="180" height="30"/></clipPath>
  <text x="794" y="442.500" clip-path="url(#wmclip)" font-family="Liberation Sans, sans-serif" font-size="24" font-weight="bold" fill="#fff" textLength="33" lengthAdjust="spacingAndGlyphs">Bai</text>
  <text x="842" y="442" font-family="Liberation Sans, sans-serif" font-size="23" font-weight="bold" fill="#58565a" textLength="29.500" lengthAdjust="spacingAndGlyphs">du</text>
  <text x="882.500" y="441.500" font-family="'Noto Sans CJK SC', sans-serif" font-size="19" font-weight="bold" fill="#fff" textLength="59" lengthAdjust="spacingAndGlyphs">经验</text>
  <!-- smudge blob covering watermark bottom -->
  <path d="M817.500,440c1,4 4,6 8,5c4,-1.500 7,-2.500 12,-2.500h66c30,0 50,-2 97,1.500v41h-186c-1,-3 -2,-6 -3,-8c-4,-3 -5,-8 -5,-13c0,-6 2,-9 5,-12c2,-4 3,-8 6,-13z" fill="#49474b"/>
</svg>
</div>
<!--STATUS-->
<svg class="a" style="left:56px;top:492px" width="756" height="12" viewBox="56 492 756 12">
  <g opacity=".45" stroke="#bdbdbd" stroke-width="1" fill="none"><rect x="63.500" y="496.500" width="10" height="8"/><path d="M66,496.500v8M71,496.500v8"/></g>
  <path d="M87,504v-6.500h6" stroke="#e0e0e0" stroke-width="1.500" fill="none"/><path d="M92,494.500l4,3l-4,3z" fill="#e8e8e8"/>
  <rect x="105" y="494" width="32.500" height="10" fill="#8e8d90"/>
  <text x="106.500" y="503.500" font-family="Liberation Mono, monospace" font-size="10.500" fill="#262626" textLength="30" lengthAdjust="spacingAndGlyphs">122.05</text>
  <rect x="139" y="494" width="9.500" height="10" fill="#343236"/><path d="M140.500,498h6.500l-3.250,4.500z" fill="#e6e6e6"/>
  <g fill="#6d6c6f"><path d="M158,497.500v7h1.200v-7zM164,497.500v7l-4,-3.500z"/><path d="M176,497.500v7l-4.500,-3.500z"/><path d="M238,497.500v7l4.500,-3.500z"/><path d="M249,497.500v7l4,-3.500zM254,497.500v7h1.200v-7z"/></g>
  <rect x="183" y="494" width="32.500" height="10" fill="#8e8d90"/>
  <text x="185" y="503.500" font-family="Liberation Mono, monospace" font-size="10.500" fill="#262626">1</text>
  <rect x="217" y="494" width="9.500" height="10" fill="#343236"/><path d="M218.500,498h6.500l-3.250,4.500z" fill="#e6e6e6"/>
  <text x="330" y="505" font-family="Liberation Sans, 'Noto Sans CJK SC', sans-serif" font-size="10" fill="#d0d0d0" textLength="18" lengthAdjust="spacingAndGlyphs">选择</text>
  <path d="M424,496v7.500l4.500,-3.750z" fill="#e6e6e6"/>
  <rect x="432" y="493" width="365.500" height="11" fill="#353436"/>
  <path d="M441.500,496v7.500l-5,-3.750z" fill="#ececec"/>
  <rect x="609" y="493" width="12" height="11" fill="#a09fa2"/>
  <rect x="755" y="492.500" width="42.500" height="12" fill="#5f5d61"/>
</svg>
<!--OVERLAYS-->
<!-- mouse cursor -->
<svg class="a" style="left:79.300px;top:209px" width="12" height="18" viewBox="0 0 12 18"><path d="M1.500,1.500v11.200l2.600,-2.400l2.100,4.800l1.800,-.8l-2.100,-4.700h3.500z" fill="#0a0a0a" stroke="#9f9da1" stroke-width=".8" stroke-linejoin="round"/></svg>
<!-- IME toolbar -->
<svg class="a" style="left:650px;top:470px" width="112" height="24" viewBox="650 470 112 24">
  <rect x="668" y="474.500" width="87.300" height="18.500" rx="1" fill="#f9faf9"/>
  <g transform="rotate(-9 664 483)"><rect x="654" y="474.500" width="20.500" height="17.500" rx="3" fill="#43b035"/><rect x="655.500" y="476" width="17.500" height="14.500" rx="2" fill="none" stroke="#7fd06f" stroke-width="1"/>
  <text x="657.800" y="489.500" font-family="Liberation Sans, sans-serif" font-weight="bold" font-size="17" fill="#fff" textLength="13" lengthAdjust="spacingAndGlyphs">S</text></g>
  <text x="680.500" y="488.500" font-family="'Noto Sans CJK SC', sans-serif" font-size="12" font-weight="bold" fill="#3a4250">五</text>
  <path d="M706.500,477.500a6,6 0 0 1 -7.500,8a6.200,6.200 0 0 0 10,-1.500a6,6 0 0 0 -2.500,-6.500z" fill="#2e3644"/>
  <circle cx="718" cy="480.500" r="1.500" fill="#2e3644"/><path d="M721,483.500a1.600,1.600 0 1 1 1.500,2c0,1.500 -.8,2.300 -2,2.800c.8,-.8 1.200,-1.700 .5,-4.800z" fill="#2e3644"/>
  <rect x="732" y="478" width="12.500" height="9.500" rx="1" fill="#2e3644"/><g fill="#f7f8f7"><rect x="733.500" y="480" width="1.500" height="1.500"/><rect x="736" y="480" width="1.500" height="1.500"/><rect x="738.500" y="480" width="1.500" height="1.500"/><rect x="741" y="480" width="1.500" height="1.500"/><rect x="733.500" y="482.500" width="1.500" height="1.500"/><rect x="736" y="482.500" width="1.500" height="1.500"/><rect x="738.500" y="482.500" width="1.500" height="1.500"/><rect x="741" y="482.500" width="1.500" height="1.500"/><rect x="735" y="485" width="6.500" height="1.200"/></g>
  <path d="M751,482.500l3,-2.500v6z" fill="#c5d9c0"/>
</svg>
</body>
</html>
